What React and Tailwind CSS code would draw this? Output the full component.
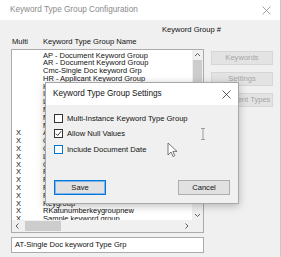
import { useState } from 'react';

const groups = [
  { name: 'AP - Document Keyword Group', multi: false },
  { name: 'AR - Document Keyword Group', multi: false },
  { name: 'Cmc-Single Doc keyword Grp', multi: false },
  { name: 'HR - Applicant Keyword Group', multi: false },
  { name: 'HR - Employee Keyword Group', multi: false },
  { name: 'Invoice Keyword Group', multi: false },
  { name: 'Loan Document Group', multi: false },
  { name: 'Medical Records Group', multi: false },
  { name: 'Member Keyword Group', multi: false },
  { name: 'Mortgage Keyword Group', multi: false },
  { name: 'Address Multi Group', multi: true },
  { name: 'Contact Multi Group', multi: true },
  { name: 'Claims Multi Group', multi: true },
  { name: 'Line Item Group', multi: true },
  { name: 'Order Detail Group', multi: true },
  { name: 'Payment Multi Group', multi: true },
  { name: 'PO Line Group', multi: true },
  { name: 'Provider Group', multi: true },
  { name: 'Policy Multi Group', multi: true },
  { name: 'Keygroup', multi: true },
  { name: 'RKatunumberkeygroupnew', multi: true },
  { name: 'Sample keyword group', multi: true },
];

const font = "font-['Liberation_Sans',Arial,sans-serif]";

const Checkbox = ({ checked, focused, label }) => (
  <div className="flex items-center gap-[4px] h-[10px]">
    <div
      className={`w-[9px] h-[9px] bg-white border flex items-center justify-center ${
        focused ? 'border-[#0078d7]' : 'border-[#333]'
      }`}
    >
      {checked && (
        <svg width="7" height="7" viewBox="0 0 7 7">
          <path d="M0.8 3.6 L2.7 5.5 L6.2 1.2" fill="none" stroke="#222" strokeWidth="0.9" />
        </svg>
      )}
    </div>
    <span className="text-[7.6px] leading-[9px] text-[#111]">{label}</span>
  </div>
);

const SideButton = ({ children }) => (
  <div className="h-[14px] w-[62px] bg-[#e3e3e3] border border-[#d6d6d6] flex items-center justify-center text-[7.6px] text-[#a6a6a6]">
    {children}
  </div>
);

const App = () => {
  const [selected] = useState('AT-Single Doc keyword Type Grp');

  return (
    <div className={`relative w-[281px] h-[257px] overflow-hidden bg-[#f0f0f0] border-r border-[#c8c8c8] ${font}`}>
      {/* window title */}
      <div className="h-[20px] bg-white flex items-center justify-between pl-[10px] pr-[9px]">
        <span className="text-[8.2px] text-[#8a8a8a]">Keyword Type Group Configuration</span>
        <svg width="9" height="9" viewBox="0 0 9 9">
          <path d="M0.5 0.5 L8.5 8.5 M8.5 0.5 L0.5 8.5" stroke="#9a9a9a" strokeWidth="0.9" />
        </svg>
      </div>

      <div className="text-[7.6px] leading-[9px] text-[#111]">
        <div className="pl-[162px] mt-[4.5px]">Keyword Group #</div>
        <div className="flex mt-[3.5px]">
          <span className="pl-[12px] w-[43px]">Multi</span>
          <span>Keyword Type Group Name</span>
        </div>

        <div className="flex gap-[7px] mt-[2.5px] pl-[11px]">
          {/* list box */}
          <div className="w-[193px] h-[184px] bg-white border border-[#ababab] flex flex-col">
            <div className="flex flex-1 min-h-0">
              <div className="flex-1 overflow-hidden pt-[2px]">
                {groups.map((g) => (
                  <div key={g.name} className="flex h-[7.8px] leading-[7.8px] text-[7.5px] whitespace-nowrap">
                    <span className="w-[31px] pl-[4px]">{g.multi ? 'X' : ''}</span>
                    <span>{g.name}</span>
                  </div>
                ))}
              </div>
              <div className="w-[11px] bg-[#f0f0f0] flex flex-col items-center">
                <svg width="7" height="10" viewBox="0 0 7 10" className="shrink-0">
                  <path d="M1 6 L3.5 3.5 L6 6" fill="none" stroke="#606060" strokeWidth="1" />
                </svg>
                <div className="w-[9px] h-[90px] bg-[#cdcdcd]" />
                <div className="flex-1" />
                <svg width="7" height="10" viewBox="0 0 7 10" className="shrink-0">
                  <path d="M1 4 L3.5 6.5 L6 4" fill="none" stroke="#606060" strokeWidth="1" />
                </svg>
              </div>
            </div>
            <div className="h-[12px] flex bg-[#f0f0f0]">
              <div className="flex-1 flex items-center">
                <svg width="11" height="12" viewBox="0 0 11 12" className="shrink-0">
                  <path d="M6.5 3.5 L4 6 L6.5 8.5" fill="none" stroke="#606060" strokeWidth="1" />
                </svg>
                <div className="ml-[2px] w-[36px] h-[10px] bg-[#cdcdcd]" />
                <div className="flex-1" />
                <svg width="11" height="12" viewBox="0 0 11 12" className="shrink-0">
                  <path d="M4.5 3.5 L7 6 L4.5 8.5" fill="none" stroke="#606060" strokeWidth="1" />
                </svg>
              </div>
              <div className="w-[11px]" />
            </div>
          </div>

          {/* side buttons */}
          <div className="flex flex-col gap-[7px] pt-[2px]">
            <SideButton>Keywords</SideButton>
            <SideButton>Settings</SideButton>
            <SideButton>Document Types</SideButton>
          </div>
        </div>

        <div className="ml-[11px] mt-[4px] w-[193px] h-[16px] bg-white border border-[#ababab] flex items-center pl-[3px] text-[7.6px]">
          {selected}
        </div>
      </div>

      {/* settings dialog */}
      <div className="absolute left-[45px] top-[82px] w-[194px] h-[122px] bg-[#f0f0f0] border border-[#a8a8a8] shadow-[0_2px_8px_rgba(0,0,0,0.25)] flex flex-col">
        <div className="h-[22px] bg-white flex items-center justify-between pl-[7px] pr-[7px]">
          <span className="text-[8.2px] text-[#111]">Keyword Type Group Settings</span>
          <svg width="9" height="9" viewBox="0 0 9 9">
            <path d="M0.5 0.5 L8.5 8.5 M8.5 0.5 L0.5 8.5" stroke="#333" strokeWidth="0.8" />
          </svg>
        </div>
        <div className="flex flex-col gap-[5.5px] pl-[8px] pt-[8px]">
          <Checkbox label="Multi-Instance Keyword Type Group" />
          <Checkbox checked label="Allow Null Values" />
          <Checkbox focused label="Include Document Date" />
        </div>
        <div className="flex justify-between px-[8px] mt-[26px]">
          <div className="w-[52px] h-[15px] bg-[#e1e1e1] border border-[#0078d7] shadow-[inset_0_0_0_1px_#7eb4ea] flex items-center justify-center text-[7.6px] text-[#111]">
            Save
          </div>
          <div className="w-[52px] h-[15px] bg-[#e1e1e1] border border-[#adadad] flex items-center justify-center text-[7.6px] text-[#111]">
            Cancel
          </div>
        </div>
      </div>

      {/* mouse cursors */}
      <svg className="absolute left-[200px] top-[128px]" width="6" height="12" viewBox="0 0 6 12">
        <path d="M1 0.5 H5 M3 0.5 V11.5 M1 11.5 H5" stroke="#8a8a8a" strokeWidth="0.8" fill="none" />
      </svg>
      <svg className="absolute left-[167px] top-[142px]" width="11" height="16" viewBox="0 0 11 16">
        <path d="M1 1 V13 L4 10 L6 14.5 L7.8 13.7 L5.9 9.4 L10 9.4 Z" fill="white" stroke="#555" strokeWidth="0.8" strokeLinejoin="round" />
      </svg>
    </div>
  );
};

export default App;
